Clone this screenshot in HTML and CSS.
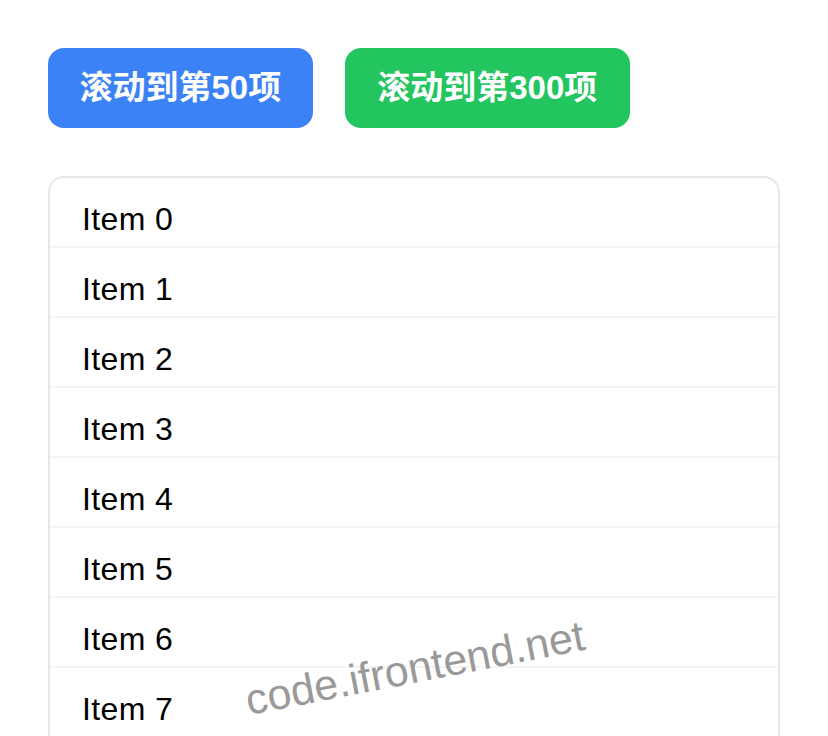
FILE: index.html
```html
<!DOCTYPE html>
<html lang="zh-CN">
<head>
<meta charset="utf-8">
<title>Virtual List</title>
<link rel="stylesheet" href="styles.css">
</head>
<body>
<div class="page">
  <div class="actions">
    <button class="btn btn-blue">滚动到第50项</button>
    <button class="btn btn-green">滚动到第300项</button>
  </div>
  <div class="list">
    <div class="row">Item 0</div>
    <div class="row">Item 1</div>
    <div class="row">Item 2</div>
    <div class="row">Item 3</div>
    <div class="row">Item 4</div>
    <div class="row">Item 5</div>
    <div class="row">Item 6</div>
    <div class="row">Item 7</div>
    <div class="row">Item 8</div>
    <div class="row">Item 9</div>
  </div>
</div>
<div class="watermark">code.ifrontend.net</div>
</body>
</html>
```

FILE: styles.css
```css
html, body {
  margin: 0;
  padding: 0;
  background: #ffffff;
  overflow: hidden;
  height: 100%;
}

body {
  font-family: "Liberation Sans", Arial, "Noto Sans CJK SC", sans-serif;
  color: #000000;
}

.page {
  padding: 48px;
}

.actions {
  display: flex;
  gap: 32px;
}

.btn {
  font-family: "Liberation Sans", "Noto Sans CJK SC", sans-serif;
  font-weight: 700;
  font-size: 33px;
  line-height: 48px;
  color: #ffffff;
  border: none;
  border-radius: 16px;
  padding: 16px 31.5px;
  margin: 0;
  cursor: pointer;
}

.btn-blue {
  background: #3b82f6;
}

.btn-green {
  background: #22c55e;
  padding: 16px 32.5px;
}

.list {
  margin-top: 48px;
  border: 2px solid #e5e7eb;
  border-radius: 16px;
  height: 800px;
  overflow: hidden;
}

.row {
  box-sizing: border-box;
  height: 70px;
  padding: 17px 32px 0;
  font-size: 32px;
  line-height: 48px;
  letter-spacing: 0.4px;
  border-bottom: 2px solid #f3f4f6;
}

.watermark {
  position: absolute;
  left: 415px;
  top: 668px;
  transform: translate(-50%, -50%) rotate(-11deg);
  font-family: "Liberation Sans", Arial, sans-serif;
  font-size: 43px;
  line-height: 1;
  color: #999999;
  white-space: nowrap;
  pointer-events: none;
}
```
